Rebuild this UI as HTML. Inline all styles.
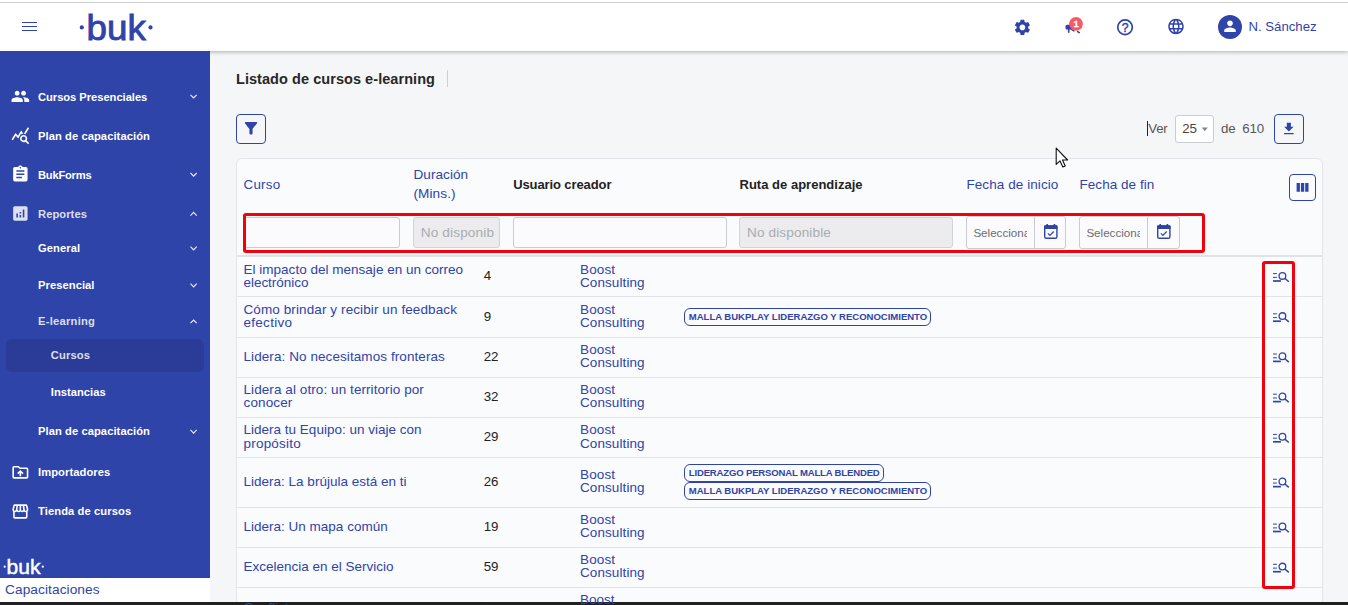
<!DOCTYPE html>
<html lang="es"><head><meta charset="utf-8"><title>Listado de cursos e-learning</title>
<style>
html,body{margin:0;padding:0}
body{width:1348px;height:605px;overflow:hidden;position:relative;background:#f5f6f8;font-family:"Liberation Sans",sans-serif;}
.t{position:absolute;white-space:nowrap;line-height:20px}
.a{position:absolute}
svg{position:absolute;overflow:visible}
#hdr{left:0;top:0;width:1348px;height:51px;background:#fff;box-shadow:0 1px 4px rgba(0,0,0,.3)}
#side{left:0;top:51px;width:210px;height:527px;background:#2f44a8}
#cap{left:0;top:578px;width:210px;height:24px;background:#fff}
#card{left:236px;top:158px;width:1085px;height:460px;background:#fafbfd;border:1px solid #e3e5ea;border-radius:6px}
.inp{position:absolute;box-sizing:border-box;border:1px solid #c9ccd1;border-radius:3px;background:#fbfbfd}
.dis{background:#ececee;border-color:#d2d4d8}
.btn{position:absolute;box-sizing:border-box;border:1px solid #2f44a8;border-radius:4px}
.hl{position:absolute;left:237px;width:1085px;height:1px;background:#e2e4e8}
.bdg{position:absolute;box-sizing:border-box;border:1px solid #2f44a8;border-radius:6px;height:18px;background:#fbfbfd}
.red{position:absolute;box-sizing:border-box;border:3.5px solid #f2000c;border-radius:3px}
</style></head><body>

<div class="a" id="card"></div>
<div class="a" id="hdr"></div>
<div class="a" id="side"></div>
<div class="a" style="left:6px;top:339px;width:198px;height:33px;border-radius:6px;background:#2b3c98"></div>
<div class="a" id="cap"></div>
<div class="a" style="left:0;top:2px;width:1348px;height:1px;background:#cfcfcf"></div>
<div class="a" style="left:0;top:602px;width:1348px;height:3px;background:#202020"></div>
<div class="a" style="left:22px;top:22px;width:14.5px;height:1px;background:#2f44a8"></div>
<div class="a" style="left:22px;top:26px;width:14.5px;height:1px;background:#2f44a8"></div>
<div class="a" style="left:22px;top:30px;width:14.5px;height:1px;background:#2f44a8"></div>
<svg style="left:76px;top:8px" width="82" height="40" viewBox="76 8 82 40"><g fill="#2f44a8" font-family="Liberation Sans, sans-serif">
<text x="86.6" y="40.25" font-size="35.3" textLength="59.2" lengthAdjust="spacingAndGlyphs" stroke="#2f44a8" stroke-width="0.9">buk</text>
<circle cx="81.8" cy="27.4" r="2.1"/><circle cx="150.5" cy="27.4" r="2.1"/></g></svg>
<svg style="left:0;top:0" width="1348" height="60">
<path transform="translate(1012.80 17.80) scale(0.8)" d="M19.14 12.94c.04-.3.06-.61.06-.94 0-.32-.02-.64-.07-.94l2.03-1.58c.18-.14.23-.41.12-.61l-1.92-3.32c-.12-.22-.37-.29-.59-.22l-2.39.96c-.5-.38-1.03-.7-1.62-.94l-.36-2.54c-.04-.24-.24-.41-.48-.41h-3.84c-.24 0-.43.17-.47.41l-.36 2.54c-.59.24-1.13.57-1.62.94l-2.39-.96c-.22-.08-.47 0-.59.22L2.740 8.870c-.12.21-.08.47.12.61l2.030 1.580c-.05.3-.09.63-.09.94s.02.64.07.94l-2.030 1.580c-.18.14-.23.41-.12.61l1.920 3.320c.12.22.37.29.59.22l2.390-.96c.5.38 1.030.7 1.620.94l.36 2.540c.05.24.24.41.48.41h3.840c.24 0 .44-.17.47-.41l.36-2.540c.59-.24 1.130-.56 1.620-.94l2.390.96c.22.08.47 0 .59-.22l1.920-3.320c.12-.22.07-.47-.12-.61l-2.010-1.580zM12 15.600c-1.980 0-3.600-1.620-3.600-3.600s1.620-3.600 3.600-3.600 3.600 1.620 3.600 3.600-1.620 3.600-3.600 3.600z" fill="#2f44a8"/>
<path transform="translate(1063.90 17.60) scale(0.8)" d="M18 11v2h4v-2h-4zm-2 6.610c.96.71 2.210 1.650 3.200 2.390.4-.53.8-1.070 1.200-1.600-.99-.74-2.240-1.680-3.200-2.400-.4.54-.8 1.080-1.200 1.610zM20.400 5.600c-.4-.53-.8-1.070-1.200-1.600-.99.74-2.240 1.680-3.200 2.400.4.53.8 1.070 1.200 1.600.96-.72 2.210-1.650 3.200-2.400zM4 9c-1.100 0-2 .9-2 2v2c0 1.100.9 2 2 2h1v4h2v-4h1l5 3V6L8 9H4zm11.500 3c0-1.330-.58-2.530-1.500-3.350v6.690c.92-.81 1.500-2.010 1.500-3.340z" fill="#2f44a8"/>
<circle cx="1076" cy="23.8" r="6.9" fill="#f95964"/>
<text x="1076" y="27.2" font-family="Liberation Sans, sans-serif" font-weight="bold" font-size="9.4" fill="#fff" stroke="#fff" stroke-width="0.3" text-anchor="middle">1</text>
<circle cx="1125.05" cy="27.25" r="7.3" fill="none" stroke="#2f44a8" stroke-width="1.7"/>
<text x="1125.1" y="31.6" font-family="Liberation Sans, sans-serif" font-size="12.2" fill="#2f44a8" stroke="#2f44a8" stroke-width="0.45" text-anchor="middle">?</text>
<path transform="translate(1166.70 17.10) scale(0.775)" d="M11.99 2C6.47 2 2 6.48 2 12s4.47 10 9.99 10C17.52 22 22 17.52 22 12S17.52 2 11.99 2zm6.93 6h-2.950c-.32-1.250-.78-2.450-1.380-3.560 1.840.63 3.370 1.910 4.330 3.560zM12 4.040c.83 1.200 1.480 2.530 1.910 3.960h-3.820c.43-1.430 1.080-2.760 1.910-3.960zM4.260 14C4.100 13.360 4 12.690 4 12s.1-1.360.26-2h3.380c-.08.66-.14 1.320-.14 2 0 .68.06 1.340.14 2H4.260zm.82 2h2.950c.32 1.250.78 2.450 1.380 3.560-1.840-.63-3.370-1.900-4.330-3.560zm2.950-8H5.080c.96-1.660 2.490-2.930 4.330-3.560C8.810 5.550 8.350 6.750 8.030 8zM12 19.960c-.83-1.200-1.480-2.530-1.910-3.960h3.820c-.43 1.430-1.080 2.760-1.910 3.960zM14.340 14H9.660c-.09-.66-.16-1.320-.16-2 0-.68.07-1.350.16-2h4.680c.09.65.16 1.320.16 2 0 .68-.07 1.340-.16 2zm.25 5.560c.6-1.110 1.060-2.310 1.380-3.560h2.950c-.96 1.650-2.490 2.930-4.330 3.560zM16.360 14c.08-.66.14-1.320.14-2 0-.68-.06-1.340-.14-2h3.380c.16.64.26 1.310.26 2s-.1 1.360-.26 2h-3.380z" fill="#2f44a8"/>
<circle cx="1230" cy="27" r="12" fill="#2f44a8"/>
<path transform="translate(1221.36 17.50) scale(0.72)" d="M12 12c2.210 0 4-1.790 4-4s-1.790-4-4-4-4 1.790-4 4 1.790 4 4 4zm0 2c-2.670 0-8 1.340-8 4v2h16v-2c0-2.660-5.330-4-8-4z" fill="#fff"/>
</svg>
<div class="t " style="left:1248.5px;top:17px;font-size:13.2px;color:#2f44a8;letter-spacing:-0.011px;">N. Sánchez</div>
<div class="t " style="left:38px;top:87px;font-size:11.2px;color:#ffffff;font-weight:bold;letter-spacing:-0.044px;">Cursos Presenciales</div>
<div class="t " style="left:38px;top:126px;font-size:11.2px;color:#ffffff;font-weight:bold;letter-spacing:0.063px;">Plan de capacitación</div>
<div class="t " style="left:38px;top:165px;font-size:11.2px;color:#ffffff;font-weight:bold;letter-spacing:-0.243px;">BukForms</div>
<div class="t " style="left:38px;top:204px;font-size:11.2px;color:#dcdfee;font-weight:bold;letter-spacing:0.057px;">Reportes</div>
<div class="t " style="left:38px;top:238px;font-size:11.2px;color:#ffffff;font-weight:bold;letter-spacing:0.067px;">General</div>
<div class="t " style="left:38px;top:275px;font-size:11.2px;color:#ffffff;font-weight:bold;letter-spacing:0.056px;">Presencial</div>
<div class="t " style="left:38px;top:311px;font-size:11.2px;color:#dcdfee;font-weight:bold;letter-spacing:0.244px;">E-learning</div>
<div class="t " style="left:50.8px;top:345px;font-size:11.2px;color:#dcdfee;font-weight:bold;letter-spacing:0.120px;">Cursos</div>
<div class="t " style="left:50.8px;top:382px;font-size:11.2px;color:#ffffff;font-weight:bold;letter-spacing:0.022px;">Instancias</div>
<div class="t " style="left:38px;top:421px;font-size:11.2px;color:#ffffff;font-weight:bold;letter-spacing:0.063px;">Plan de capacitación</div>
<div class="t " style="left:38px;top:462px;font-size:11.2px;color:#ffffff;font-weight:bold;letter-spacing:0.073px;">Importadores</div>
<div class="t " style="left:38px;top:501px;font-size:11.2px;color:#ffffff;font-weight:bold;letter-spacing:0.093px;">Tienda de cursos</div>
<svg style="left:0;top:0" width="220" height="605">
<path d="M190.5 94.80000000000001 L193.6 98.0 L196.7 94.80000000000001" fill="none" stroke="#e6e9f6" stroke-width="1.2"/>
<path d="M190.5 173.0 L193.6 176.2 L196.7 173.0" fill="none" stroke="#e6e9f6" stroke-width="1.2"/>
<path d="M190.5 215.6 L193.6 212.4 L196.7 215.6" fill="none" stroke="#e6e9f6" stroke-width="1.2"/>
<path d="M190.5 246.70000000000002 L193.6 249.9 L196.7 246.70000000000002" fill="none" stroke="#e6e9f6" stroke-width="1.2"/>
<path d="M190.5 283.59999999999997 L193.6 286.8 L196.7 283.59999999999997" fill="none" stroke="#e6e9f6" stroke-width="1.2"/>
<path d="M190.5 323.20000000000005 L193.6 320.0 L196.7 323.20000000000005" fill="none" stroke="#e6e9f6" stroke-width="1.2"/>
<path d="M190.5 429.9 L193.6 433.1 L196.7 429.9" fill="none" stroke="#e6e9f6" stroke-width="1.2"/>
<path transform="translate(10.75 86.75) scale(0.8)" d="M16 11c1.66 0 2.99-1.34 2.99-3S17.66 5 16 5c-1.66 0-3 1.34-3 3s1.34 3 3 3zm-8 0c1.66 0 2.99-1.34 2.99-3S9.66 5 8 5C6.34 5 5 6.34 5 8s1.34 3 3 3zm0 2c-2.33 0-7 1.17-7 3.5V19h14v-2.5c0-2.33-4.67-3.5-7-3.5zm8 0c-.29 0-.62.02-.97.05 1.16.84 1.97 1.97 1.97 3.45V19h6v-2.5c0-2.33-4.67-3.5-7-3.5z" fill="#fff"/>
<path transform="translate(10.75 125.75) scale(0.8)" d="M19.88 18.47c.44-.7.7-1.51.7-2.39 0-2.49-2.01-4.5-4.5-4.5s-4.5 2.01-4.5 4.5 2.01 4.5 4.49 4.5c.88 0 1.7-.26 2.39-.7L21.58 23 23 21.58l-3.12-3.11zm-3.8.11c-1.38 0-2.5-1.12-2.5-2.5s1.12-2.5 2.5-2.5 2.5 1.12 2.5 2.5-1.12 2.5-2.5 2.5zm-.36-8.5c-.74.02-1.45.18-2.1.45l-.55-.83-3.8 6.18-3.01-3.52-3.63 5.81L1 17l5-8 3 3.5L13 6l2.72 4.08zm2.59.5c-.64-.28-1.33-.45-2.05-.49L21.38 2 23 3.18l-4.69 7.4z" fill="#fff"/>
<path transform="translate(10.75 164.65) scale(0.8)" d="M19 3h-4.18C14.4 1.84 13.3 1 12 1c-1.3 0-2.4.84-2.82 2H5c-1.1 0-2 .9-2 2v14c0 1.1.9 2 2 2h14c1.1 0 2-.9 2-2V5c0-1.1-.9-2-2-2zm-7 0c.55 0 1 .45 1 1s-.45 1-1 1-1-.45-1-1 .45-1 1-1zm2 14H7v-2h7v2zm3-4H7v-2h10v2zm0-4H7V7h10v2z" fill="#fff"/>
<path transform="translate(10.75 203.90) scale(0.8)" d="M19 3H5c-1.1 0-2 .9-2 2v14c0 1.1.9 2 2 2h14c1.1 0 2-.9 2-2V5c0-1.1-.9-2-2-2zM9 17H7v-5h2v5zm4 0h-2v-3h2v3zm0-5h-2v-2h2v2zm4 5h-2V7h2v10z" fill="#dcdfee"/>
<path transform="translate(10.75 462.70) scale(0.8)" d="M20 6h-8l-2-2H4c-1.1 0-1.99.9-1.99 2L2 18c0 1.1.9 2 2 2h16c1.1 0 2-.9 2-2V8c0-1.1-.9-2-2-2zm0 12H4V6h5.17l2 2H20v10zM9.41 14.42 11 12.84V17h2v-4.16l1.59 1.59L16 13.01 12.01 9 8 13.01l1.41 1.41z" fill="#fff"/>
<path transform="translate(10.75 501.90) scale(0.8)" d="M21.9 8.89l-1.05-4.37c-.22-.9-1-1.52-1.91-1.52H5.05c-.9 0-1.69.63-1.9 1.52L2.1 8.89c-.24 1.02-.02 2.06.62 2.88.08.11.19.19.28.29V19c0 1.1.9 2 2 2h14c1.1 0 2-.9 2-2v-6.94c.09-.09.2-.18.28-.28.64-.82.87-1.87.62-2.89zm-2.990-3.9l1.050 4.370c.1.42.01.84-.25 1.17-.14.18-.44.47-.94.47-.61 0-1.14-.49-1.21-1.14L16.980 5l1.930-.01zM13 5h1.960l.54 4.520c.05.39-.07.78-.33 1.070-.22.26-.54.41-.95.41-.67 0-1.220-.59-1.220-1.310V5zM8.490 9.520L9.040 5H11v4.690c0 .72-.55 1.310-1.290 1.310-.34 0-.65-.15-.89-.41-.25-.29-.37-.68-.33-1.070zm-4.450-.16L5.050 5h1.970l-.58 4.860c-.08.65-.6 1.140-1.210 1.140-.49 0-.8-.29-.93-.47-.27-.32-.36-.75-.26-1.170zM5 19v-6.030c.08.01.15.03.23.03.87 0 1.660-.36 2.240-.95.6.6 1.400.95 2.310.95.87 0 1.650-.36 2.230-.93.59.57 1.390.93 2.290.93.84 0 1.640-.35 2.240-.95.58.59 1.370.95 2.240.95.08 0 .15-.02.23-.03V19H5z" fill="#fff"/>
</svg>
<svg style="left:0;top:550px" width="60" height="30" viewBox="0 550 60 30"><g fill="#fff" font-family="Liberation Sans, sans-serif">
<text x="6.6" y="573.8" font-size="19.8" textLength="34" lengthAdjust="spacingAndGlyphs" stroke="#fff" stroke-width="0.45">buk</text>
<circle cx="4.7" cy="566.7" r="1.1"/><circle cx="42.8" cy="566.7" r="1.1"/></g></svg>
<div class="t " style="left:5px;top:580px;font-size:13.7px;color:#2f44a8;letter-spacing:0.077px;">Capacitaciones</div>
<div class="t " style="left:236px;top:69px;font-size:14.5px;color:#272727;font-weight:bold;letter-spacing:0.056px;">Listado de cursos e-learning</div>
<div class="a" style="left:447px;top:70px;width:1px;height:17px;background:#cdd0d6"></div>
<div class="btn" style="left:236px;top:114px;width:30px;height:30px"></div>
<svg style="left:0;top:0" width="400" height="200"><path transform="translate(241.64 118.80) scale(0.78)" d="M4.250 5.610C6.270 8.200 10 13 10 13v6c0 .55.45 1 1 1h2c.55 0 1-.45 1-1v-6s3.720-4.800 5.740-7.390c.51-.66.04-1.610-.79-1.610H5.040c-.83 0-1.300.95-.79 1.610z" fill="#2f44a8"/></svg>
<div class="a" style="left:1147px;top:121px;width:1px;height:15px;background:#222"></div>
<div class="t " style="left:1148.3px;top:119px;font-size:13.3px;color:#55565a;letter-spacing:-0.300px;">Ver</div>
<div class="inp" style="left:1175px;top:115px;width:39px;height:28px;background:#fff"></div>
<div class="t " style="left:1182.2px;top:119px;font-size:13.3px;color:#444;">25</div>
<svg style="left:0;top:0" width="1348" height="200"><path d="M1201.8 127.6 h6 l-3 3.6Z" fill="#888"/></svg>
<div class="t " style="left:1221px;top:119px;font-size:13.3px;color:#55565a;letter-spacing:-0.217px;">de&nbsp; 610</div>
<div class="btn" style="left:1274px;top:114px;width:30px;height:30px"></div>
<svg style="left:0;top:0" width="1348" height="200"><path transform="translate(1280.70 120.70) scale(0.68)" d="M5 20h14v-2H5v2zM19 9h-4V3H9v6H5l7 7 7-7z" fill="#2f44a8"/></svg>
<div class="t " style="left:243.5px;top:175px;font-size:13.4px;color:#2f44a8;letter-spacing:0.250px;">Curso</div>
<div class="t " style="left:413.5px;top:165px;font-size:13.6px;color:#2f44a8;letter-spacing:0.036px;">Duración</div>
<div class="t " style="left:413.5px;top:184px;font-size:13.6px;color:#2f44a8;letter-spacing:0.083px;">(Mins.)</div>
<div class="t " style="left:513.2px;top:175px;font-size:13.0px;color:#222;font-weight:bold;letter-spacing:-0.104px;">Usuario creador</div>
<div class="t " style="left:739.5px;top:175px;font-size:13.0px;color:#222;font-weight:bold;letter-spacing:0.014px;">Ruta de aprendizaje</div>
<div class="t " style="left:966.4px;top:175px;font-size:13.5px;color:#2f44a8;letter-spacing:0.079px;">Fecha de inicio</div>
<div class="t " style="left:1079.5px;top:175px;font-size:13.5px;color:#2f44a8;letter-spacing:0.045px;">Fecha de fin</div>
<div class="btn" style="left:1289px;top:174.3px;width:27px;height:26.5px"></div>
<svg style="left:0;top:0" width="1348" height="220"><path d="M1296.6 183h3.3v8.8h-3.3ZM1300.9 183h3.3v8.8h-3.3ZM1305.2 183h3.3v8.8h-3.3Z" fill="#2f44a8"/></svg>
<div class="inp" style="left:243px;top:217px;width:157px;height:31px"></div>
<div class="inp dis" style="left:413px;top:217px;width:87px;height:31px"></div>
<div class="t " style="left:420.7px;top:223px;font-size:13.6px;color:#a9abb0;letter-spacing:0.155px;">No disponib</div>
<div class="inp" style="left:513px;top:217px;width:214px;height:31px"></div>
<div class="inp dis" style="left:739px;top:217px;width:214px;height:31px"></div>
<div class="t " style="left:747px;top:223px;font-size:13.6px;color:#a9abb0;letter-spacing:0.125px;">No disponible</div>
<div class="inp" style="left:966px;top:216px;width:100px;height:33px"></div>
<div class="a" style="left:1034px;top:217px;width:1px;height:31px;background:#c9ccd1"></div>
<div class="t " style="left:973.4px;top:223px;font-size:11.6px;color:#6a6c70;width:53.4px;overflow:hidden;">Seleccionar</div>
<svg style="left:0;top:0" width="1348" height="260"><rect x="1044.7" y="226" width="12.2" height="12.3" rx="1.6" fill="none" stroke="#2f44a8" stroke-width="1.4"/>
<rect x="1044" y="225.3" width="13.6" height="3.6" rx="1" fill="#2f44a8"/><rect x="1046.4" y="224" width="1.6" height="2.4" fill="#2f44a8"/><rect x="1053.6" y="224" width="1.6" height="2.4" fill="#2f44a8"/>
<path d="M1047.9 233.4 l2 2 l3.8 -3.9" fill="none" stroke="#2f44a8" stroke-width="1.2"/></svg>
<div class="inp" style="left:1079px;top:216px;width:101px;height:33px"></div>
<div class="a" style="left:1147px;top:217px;width:1px;height:31px;background:#c9ccd1"></div>
<div class="t " style="left:1086.4px;top:223px;font-size:11.6px;color:#6a6c70;width:53.4px;overflow:hidden;">Seleccionar</div>
<svg style="left:0;top:0" width="1348" height="260"><rect x="1157.7" y="226" width="12.2" height="12.3" rx="1.6" fill="none" stroke="#2f44a8" stroke-width="1.4"/>
<rect x="1157" y="225.3" width="13.6" height="3.6" rx="1" fill="#2f44a8"/><rect x="1159.4" y="224" width="1.6" height="2.4" fill="#2f44a8"/><rect x="1166.6" y="224" width="1.6" height="2.4" fill="#2f44a8"/>
<path d="M1160.9 233.4 l2 2 l3.8 -3.9" fill="none" stroke="#2f44a8" stroke-width="1.2"/></svg>
<div class="hl" style="top:255px;height:2px;background:#e0e2e6"></div>
<div class="hl" style="top:296px"></div>
<div class="hl" style="top:337px"></div>
<div class="hl" style="top:377px"></div>
<div class="hl" style="top:417px"></div>
<div class="hl" style="top:457px"></div>
<div class="hl" style="top:507px"></div>
<div class="hl" style="top:547px"></div>
<div class="hl" style="top:587px"></div>
<svg style="left:0;top:0" width="1348" height="605" id="acts">
<g transform="translate(1273 272.80)"><path d="M0 .8h3.9M0 4.6h3.9" stroke="#2f44a8" stroke-width="1" fill="none"/><path d="M0 8.2h7.9" stroke="#2f44a8" stroke-width="1.7" fill="none"/><circle cx="9.4" cy="3.1" r="3.35" fill="none" stroke="#2f44a8" stroke-width="1.3"/><path d="M11.8 5.5 L15.8 8.9" stroke="#2f44a8" stroke-width="1.5" fill="none"/></g>
<g transform="translate(1273 313.00)"><path d="M0 .8h3.9M0 4.6h3.9" stroke="#2f44a8" stroke-width="1" fill="none"/><path d="M0 8.2h7.9" stroke="#2f44a8" stroke-width="1.7" fill="none"/><circle cx="9.4" cy="3.1" r="3.35" fill="none" stroke="#2f44a8" stroke-width="1.3"/><path d="M11.8 5.5 L15.8 8.9" stroke="#2f44a8" stroke-width="1.5" fill="none"/></g>
<g transform="translate(1273 353.20)"><path d="M0 .8h3.9M0 4.6h3.9" stroke="#2f44a8" stroke-width="1" fill="none"/><path d="M0 8.2h7.9" stroke="#2f44a8" stroke-width="1.7" fill="none"/><circle cx="9.4" cy="3.1" r="3.35" fill="none" stroke="#2f44a8" stroke-width="1.3"/><path d="M11.8 5.5 L15.8 8.9" stroke="#2f44a8" stroke-width="1.5" fill="none"/></g>
<g transform="translate(1273 393.40)"><path d="M0 .8h3.9M0 4.6h3.9" stroke="#2f44a8" stroke-width="1" fill="none"/><path d="M0 8.2h7.9" stroke="#2f44a8" stroke-width="1.7" fill="none"/><circle cx="9.4" cy="3.1" r="3.35" fill="none" stroke="#2f44a8" stroke-width="1.3"/><path d="M11.8 5.5 L15.8 8.9" stroke="#2f44a8" stroke-width="1.5" fill="none"/></g>
<g transform="translate(1273 433.60)"><path d="M0 .8h3.9M0 4.6h3.9" stroke="#2f44a8" stroke-width="1" fill="none"/><path d="M0 8.2h7.9" stroke="#2f44a8" stroke-width="1.7" fill="none"/><circle cx="9.4" cy="3.1" r="3.35" fill="none" stroke="#2f44a8" stroke-width="1.3"/><path d="M11.8 5.5 L15.8 8.9" stroke="#2f44a8" stroke-width="1.5" fill="none"/></g>
<g transform="translate(1273 478.45)"><path d="M0 .8h3.9M0 4.6h3.9" stroke="#2f44a8" stroke-width="1" fill="none"/><path d="M0 8.2h7.9" stroke="#2f44a8" stroke-width="1.7" fill="none"/><circle cx="9.4" cy="3.1" r="3.35" fill="none" stroke="#2f44a8" stroke-width="1.3"/><path d="M11.8 5.5 L15.8 8.9" stroke="#2f44a8" stroke-width="1.5" fill="none"/></g>
<g transform="translate(1273 523.30)"><path d="M0 .8h3.9M0 4.6h3.9" stroke="#2f44a8" stroke-width="1" fill="none"/><path d="M0 8.2h7.9" stroke="#2f44a8" stroke-width="1.7" fill="none"/><circle cx="9.4" cy="3.1" r="3.35" fill="none" stroke="#2f44a8" stroke-width="1.3"/><path d="M11.8 5.5 L15.8 8.9" stroke="#2f44a8" stroke-width="1.5" fill="none"/></g>
<g transform="translate(1273 563.50)"><path d="M0 .8h3.9M0 4.6h3.9" stroke="#2f44a8" stroke-width="1" fill="none"/><path d="M0 8.2h7.9" stroke="#2f44a8" stroke-width="1.7" fill="none"/><circle cx="9.4" cy="3.1" r="3.35" fill="none" stroke="#2f44a8" stroke-width="1.3"/><path d="M11.8 5.5 L15.8 8.9" stroke="#2f44a8" stroke-width="1.5" fill="none"/></g>
</svg>
<div class="t " style="left:243.5px;top:260px;font-size:13.5px;color:#2f44a8;letter-spacing:0.015px;">El impacto del mensaje en un correo</div>
<div class="t " style="left:243.5px;top:273px;font-size:13.5px;color:#2f44a8;letter-spacing:-0.040px;">electrónico</div>
<div class="t " style="left:483.7px;top:266px;font-size:13.3px;color:#222;">4</div>
<div class="t " style="left:580px;top:260px;font-size:13.5px;color:#2f44a8;letter-spacing:0.150px;">Boost</div>
<div class="t " style="left:580px;top:273px;font-size:13.5px;color:#2f44a8;letter-spacing:0.089px;">Consulting</div>
<div class="t " style="left:243.5px;top:300px;font-size:13.5px;color:#2f44a8;letter-spacing:0.100px;">Cómo brindar y recibir un feedback</div>
<div class="t " style="left:243.5px;top:313px;font-size:13.5px;color:#2f44a8;letter-spacing:0.286px;">efectivo</div>
<div class="t " style="left:483.7px;top:307px;font-size:13.3px;color:#222;">9</div>
<div class="t " style="left:580px;top:300px;font-size:13.5px;color:#2f44a8;letter-spacing:0.150px;">Boost</div>
<div class="t " style="left:580px;top:313px;font-size:13.5px;color:#2f44a8;letter-spacing:0.089px;">Consulting</div>
<div class="bdg" style="left:684px;top:308.00px;width:247px;height:17.8px"></div>
<div class="t " style="left:688.8px;top:307px;font-size:9.55px;color:#2f44a8;font-weight:bold;letter-spacing:-0.027px;">MALLA BUKPLAY LIDERAZGO Y RECONOCIMIENTO</div>
<div class="t " style="left:243.5px;top:347px;font-size:13.5px;color:#2f44a8;letter-spacing:0.081px;">Lidera: No necesitamos fronteras</div>
<div class="t " style="left:483.7px;top:347px;font-size:13.3px;color:#222;">22</div>
<div class="t " style="left:580px;top:340px;font-size:13.5px;color:#2f44a8;letter-spacing:0.150px;">Boost</div>
<div class="t " style="left:580px;top:353px;font-size:13.5px;color:#2f44a8;letter-spacing:0.089px;">Consulting</div>
<div class="t " style="left:243.5px;top:380px;font-size:13.5px;color:#2f44a8;letter-spacing:0.078px;">Lidera al otro: un territorio por</div>
<div class="t " style="left:243.5px;top:393px;font-size:13.5px;color:#2f44a8;letter-spacing:0.133px;">conocer</div>
<div class="t " style="left:483.7px;top:387px;font-size:13.3px;color:#222;">32</div>
<div class="t " style="left:580px;top:380px;font-size:13.5px;color:#2f44a8;letter-spacing:0.150px;">Boost</div>
<div class="t " style="left:580px;top:393px;font-size:13.5px;color:#2f44a8;letter-spacing:0.089px;">Consulting</div>
<div class="t " style="left:243.5px;top:420px;font-size:13.5px;color:#2f44a8;letter-spacing:0.007px;">Lidera tu Equipo: un viaje con</div>
<div class="t " style="left:243.5px;top:434px;font-size:13.5px;color:#2f44a8;letter-spacing:0.212px;">propósito</div>
<div class="t " style="left:483.7px;top:427px;font-size:13.3px;color:#222;">29</div>
<div class="t " style="left:580px;top:420px;font-size:13.5px;color:#2f44a8;letter-spacing:0.150px;">Boost</div>
<div class="t " style="left:580px;top:434px;font-size:13.5px;color:#2f44a8;letter-spacing:0.089px;">Consulting</div>
<div class="t " style="left:243.5px;top:472px;font-size:13.5px;color:#2f44a8;letter-spacing:0.007px;">Lidera: La brújula está en ti</div>
<div class="t " style="left:483.7px;top:472px;font-size:13.3px;color:#222;">26</div>
<div class="t " style="left:580px;top:465px;font-size:13.5px;color:#2f44a8;letter-spacing:0.150px;">Boost</div>
<div class="t " style="left:580px;top:478px;font-size:13.5px;color:#2f44a8;letter-spacing:0.089px;">Consulting</div>
<div class="bdg" style="left:684px;top:464.05px;width:199.5px;height:17.8px"></div>
<div class="t " style="left:688.8px;top:463px;font-size:9.55px;color:#2f44a8;font-weight:bold;letter-spacing:-0.171px;">LIDERAZGO PERSONAL MALLA BLENDED</div>
<div class="bdg" style="left:684px;top:482.05px;width:247px;height:17.8px"></div>
<div class="t " style="left:688.8px;top:481px;font-size:9.55px;color:#2f44a8;font-weight:bold;letter-spacing:-0.027px;">MALLA BUKPLAY LIDERAZGO Y RECONOCIMIENTO</div>
<div class="t " style="left:243.5px;top:517px;font-size:13.5px;color:#2f44a8;letter-spacing:0.005px;">Lidera: Un mapa común</div>
<div class="t " style="left:483.7px;top:517px;font-size:13.3px;color:#222;">19</div>
<div class="t " style="left:580px;top:510px;font-size:13.5px;color:#2f44a8;letter-spacing:0.150px;">Boost</div>
<div class="t " style="left:580px;top:523px;font-size:13.5px;color:#2f44a8;letter-spacing:0.089px;">Consulting</div>
<div class="t " style="left:243.5px;top:557px;font-size:13.5px;color:#2f44a8;letter-spacing:-0.008px;">Excelencia en el Servicio</div>
<div class="t " style="left:483.7px;top:557px;font-size:13.3px;color:#222;">59</div>
<div class="t " style="left:580px;top:550px;font-size:13.5px;color:#2f44a8;letter-spacing:0.150px;">Boost</div>
<div class="t " style="left:580px;top:563px;font-size:13.5px;color:#2f44a8;letter-spacing:0.089px;">Consulting</div>
<div class="t " style="left:243.5px;top:598px;font-size:13.5px;color:#2f44a8;">Conflictos</div>
<div class="t " style="left:483.7px;top:597px;font-size:13.3px;color:#222;">15</div>
<div class="t " style="left:580px;top:590px;font-size:13.5px;color:#2f44a8;">Boost</div>
<div class="red" style="left:243px;top:213px;width:962px;height:40px"></div>
<div class="red" style="left:1262px;top:261px;width:33px;height:327.5px;border-width:3px"></div>
<svg style="left:1055px;top:147px" width="16" height="22" viewBox="0 0 16 22"><path d="M1.2 1.2 V17.4 L5 13.9 L7.8 20 L10.2 18.9 L7.5 13 H12.6Z" fill="#fff" stroke="#111" stroke-width="1.1" stroke-linejoin="round"/></svg>
</body></html>
